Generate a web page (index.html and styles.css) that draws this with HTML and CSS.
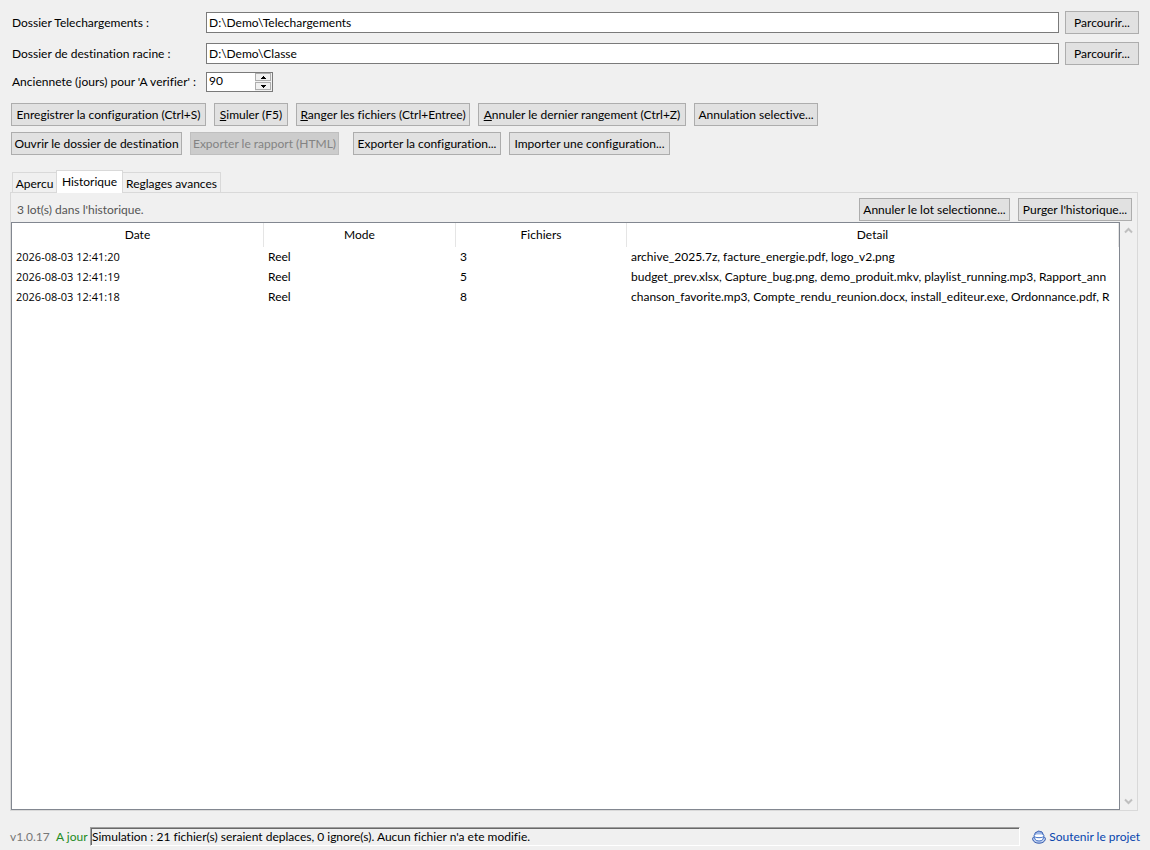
FILE: index.html
```html
<!DOCTYPE html>
<html lang="fr">
<head>
<meta charset="utf-8">
<title>Rangement des telechargements</title>
<link rel="stylesheet" href="styles.css">
</head>
<body>
<main class="app">
  <form class="settings">
    <label for="source">Dossier Telechargements :</label>
    <input class="field" id="source" type="text" value="D:\Demo\Telechargements">
    <button class="btn browse" type="button">Parcourir...</button>
    <label for="target">Dossier de destination racine :</label>
    <input class="field" id="target" type="text" value="D:\Demo\Classe">
    <button class="btn browse" type="button">Parcourir...</button>
  </form>
  <form class="settings settings-age">
    <label for="age">Anciennete (jours) pour 'A verifier' :</label>
    <div class="spin">
      <input class="spin-value" id="age" type="text" inputmode="numeric" value="90">
      <div class="spin-arrows">
        <button class="spin-btn" type="button" aria-label="Augmenter"><svg width="5" height="3" viewBox="0 0 5 3"><path d="M2 0h1v1h1v1h1v1H0V2h1V1h1z"/></svg></button>
        <button class="spin-btn" type="button" aria-label="Diminuer"><svg width="5" height="3" viewBox="0 0 5 3"><path d="M0 0h5v1H4v1H3v1H2V2H1V1H0z"/></svg></button>
      </div>
    </div>
  </form>

  <div class="toolbar">
    <button class="btn w-save" type="button">Enregistrer la configuration (Ctrl+S)</button>
    <button class="btn w-simulate" type="button"><u>S</u>imuler (F5)</button>
    <button class="btn w-sort" type="button"><u>R</u>anger les fichiers (Ctrl+Entree)</button>
    <button class="btn w-undo" type="button"><u>A</u>nnuler le dernier rangement (Ctrl+Z)</button>
    <button class="btn w-pick" type="button">Annulation selective...</button>
  </div>
  <div class="toolbar">
    <button class="btn w-open" type="button">Ouvrir le dossier de destination</button>
    <button class="btn w-report" type="button" disabled>Exporter le rapport (HTML)</button>
    <button class="btn w-export" type="button">Exporter la configuration...</button>
    <button class="btn w-import" type="button">Importer une configuration...</button>
  </div>

  <div class="tabs" role="tablist">
    <button class="tab w-preview" type="button" role="tab" aria-selected="false">Apercu</button>
    <button class="tab w-history" type="button" role="tab" aria-selected="true">Historique</button>
    <button class="tab w-advanced" type="button" role="tab" aria-selected="false">Reglages avances</button>
  </div>
  <section class="panel" role="tabpanel">
    <div class="panel-head">
      <p class="count">3 lot(s) dans l'historique.</p>
      <button class="btn w-undo-lot" type="button">Annuler le lot selectionne...</button>
      <button class="btn w-purge" type="button">Purger l'historique...</button>
    </div>
    <div class="list">
      <div class="list-body">
        <table class="lots">
          <colgroup><col class="col-date"><col class="col-mode"><col class="col-files"><col></colgroup>
          <thead>
            <tr><th>Date</th><th>Mode</th><th>Fichiers</th><th>Detail</th></tr>
          </thead>
          <tbody>
            <tr><td class="date">2026-08-03 12:41:20</td><td>Reel</td><td>3</td><td>archive_2025.7z, facture_energie.pdf, logo_v2.png</td></tr>
            <tr><td class="date">2026-08-03 12:41:19</td><td>Reel</td><td>5</td><td>budget_prev.xlsx, Capture_bug.png, demo_produit.mkv, playlist_running.mp3, Rapport_ann</td></tr>
            <tr><td class="date">2026-08-03 12:41:18</td><td>Reel</td><td>8</td><td>chanson_favorite.mp3, Compte_rendu_reunion.docx, install_editeur.exe, Ordonnance.pdf, R</td></tr>
          </tbody>
        </table>
      </div>
      <div class="scroll">
        <svg width="9" height="7" viewBox="0 0 9 7"><path d="M1 5.500L4.500 2L8 5.500"/></svg>
        <svg width="9" height="7" viewBox="0 0 9 7"><path d="M1 1.500L4.500 5L8 1.500"/></svg>
      </div>
    </div>
  </section>

  <footer class="status">
    <span class="version">v1.0.17</span>
    <span class="uptodate">A jour</span>
    <output class="message">Simulation : 21 fichier(s) seraient deplaces, 0 ignore(s). Aucun fichier n'a ete modifie.</output>
    <a class="support" href="#soutenir">
      <svg width="14" height="14" viewBox="0 0 14 14"><path class="saucer" d="M2.500 6.500C.8 7.300 .3 8.500 .8 9.800C1.600 12 4 13.200 7 13.200S12.400 12 13.200 9.800C13.700 8.500 13.200 7.300 11.500 6.500"/><path class="bowl" d="M2.200 5.500C2.200 9 3.500 11 7 11S11.800 9 11.800 5.500"/><ellipse class="bowl" cx="7" cy="5.500" rx="4.800" ry="2.200"/><path class="foam" d="M3 4.500C2.500 2.800 4 1.800 5 2.200C5.500 .8 7.500 .8 8 1.800C9.500 1 11 2.500 10.800 4.500"/></svg>
      <span>Soutenir le projet</span>
    </a>
  </footer>
</main>
</body>
</html>
```
FILE: styles.css
```css
* { box-sizing: border-box; }

body {
  margin: 0;
  background: #f0f0f0;
  color: #000;
  font: 12px/16px Lato, "Open Sans", sans-serif;
  font-variant-ligatures: none;
}

button, input { font: inherit; color: inherit; margin: 0; font-variant-ligatures: none; }

.app {
  display: flex;
  flex-direction: column;
  min-height: 100vh;
  padding: 11px 10px 4px;
}

.settings {
  display: grid;
  grid-template-columns: 190px minmax(0, 1fr) 74px;
  column-gap: 6px;
  row-gap: 8px;
  align-items: center;
  padding-right: 1px;
}
.settings-age { margin-top: 7px; }
.settings label { padding-left: 2px; white-space: nowrap; }
.field {
  width: 100%;
  height: 21px;
  padding: 0 2px;
  border: 1px solid #7a7a7a;
  border-radius: 0;
  background: #fff;
}

.btn {
  height: 23px;
  padding: 0;
  border: 1px solid #adadad;
  border-radius: 0;
  background: #e1e1e1;
  text-align: center;
  white-space: nowrap;
}
.btn:disabled { background: #ccc; border-color: #bfbfbf; color: #838383; }

.spin {
  display: flex;
  width: 67px;
  height: 20px;
  border: 1px solid #7a7a7a;
  background: #fff;
}
.spin-value {
  flex: 1;
  min-width: 0;
  padding: 0 2px 2px;
  border: 0;
  background: transparent;
}
.spin-arrows { display: flex; flex-direction: column; gap: 1px; width: 17px; padding: 0 1px 1px 0; background: #f0f0f0; }
.spin-btn {
  display: flex;
  flex: 1;
  align-items: center;
  justify-content: center;
  min-height: 0;
  padding: 0;
  border: 1px solid #adadad;
  background: #f0f0f0;
}

.toolbar { display: flex; gap: 8px; padding-left: 1px; margin-top: 11px; }
.toolbar + .toolbar { margin-top: 6px; }

.w-save { width: 195px; }
.w-simulate { width: 74px; }
.w-sort { width: 174px; }
.w-undo { width: 208px; }
.w-pick { width: 124px; }
.w-open { width: 171px; }
.w-report { width: 149px; margin-right: 6px; }
.w-export { width: 148px; }
.w-import { width: 161px; }
.w-undo-lot { width: 151px; }
.w-purge { width: 114px; }

.tabs { display: flex; align-items: flex-end; padding-left: 2px; margin-top: 15px; }
.tab {
  height: 20px;
  padding: 2px 0 0;
  border: 1px solid #d9d9d9;
  border-bottom: 0;
  background: #f0f0f0;
  white-space: nowrap;
}
.tab[aria-selected="true"] {
  z-index: 1;
  height: 23px;
  margin-bottom: -1px;
  padding: 0 0 1px;
  background: #fff;
}
.w-preview { width: 44px; border-right: 0; }
.w-history { width: 67px; }
.w-advanced { width: 98px; border-left: 0; }

.panel {
  display: flex;
  flex: 1;
  flex-direction: column;
  margin-right: 2px;
  border: 1px solid #d9d9d9;
}
.panel-head { display: flex; align-items: center; gap: 8px; padding: 5px 5px 1px; }
.count { flex: 1; margin: 0; padding-left: 1px; color: #555; }

.list { display: flex; flex: 1; }
.list-body { flex: 1; min-width: 0; border: 1px solid #828790; background: #fff; }
.lots { width: 100%; table-layout: fixed; border-collapse: separate; border-spacing: 0; }
.col-date { width: 252px; }
.col-mode { width: 192px; }
.col-files { width: 171px; }
.lots th {
  height: 24px;
  padding: 0;
  border-right: 1px solid #e5e5e5;
  font-weight: 400;
  text-align: center;
}
.lots td {
  height: 20px;
  padding: 0 0 0 4px;
  overflow: hidden;
  white-space: nowrap;
}
.lots .date { font-family: "Open Sans", sans-serif; font-size: 11px; }

.scroll {
  display: flex;
  flex-direction: column;
  justify-content: space-between;
  align-items: center;
  width: 17px;
  padding: 5px 0;
}
.scroll path { fill: none; stroke: #bfbfbf; stroke-width: 2; }

.status { display: flex; align-items: center; margin-top: 16px; }
.version { width: 46px; color: #777; }
.uptodate { width: 34px; color: #228b22; white-space: nowrap; }
.message {
  flex: 1;
  height: 19px;
  margin-right: 12px;
  border: 1px solid;
  border-color: #a0a0a0 #fff #fff #a0a0a0;
  box-shadow: inset 1px 1px #696969;
  padding: 1px 0 0 1px;
  white-space: nowrap;
}
.support { display: flex; align-items: center; gap: 3px; color: #0645ad; text-decoration: none; white-space: nowrap; }
.saucer { fill: #c3d2f0; stroke: #2f57ad; }
.bowl { fill: #fff; stroke: #3f6fc4; }
.foam { fill: #9db7e8; stroke: #2f57ad; }
```
